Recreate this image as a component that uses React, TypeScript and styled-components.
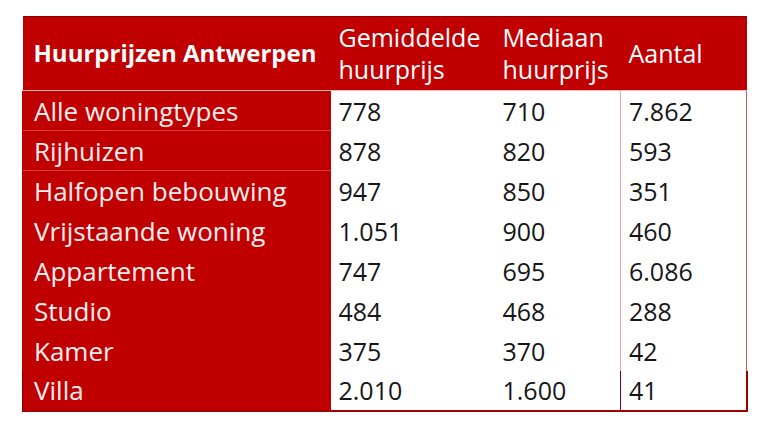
import React from 'react';
import styled, { createGlobalStyle } from 'styled-components';

type Row = {
  label: string;
  avg: string;
  median: string;
  count: string;
};

const rows: Row[] = [
  { label: 'Alle woningtypes', avg: '778', median: '710', count: '7.862' },
  { label: 'Rijhuizen', avg: '878', median: '820', count: '593' },
  { label: 'Halfopen bebouwing', avg: '947', median: '850', count: '351' },
  { label: 'Vrijstaande woning', avg: '1.051', median: '900', count: '460' },
  { label: 'Appartement', avg: '747', median: '695', count: '6.086' },
  { label: 'Studio', avg: '484', median: '468', count: '288' },
  { label: 'Kamer', avg: '375', median: '370', count: '42' },
  { label: 'Villa', avg: '2.010', median: '1.600', count: '41' },
];

const RED = '#c00000';

const GlobalStyle = createGlobalStyle`
  html, body {
    margin: 0;
    background: #ffffff;
  }
  body {
    font-family: "Open Sans", "Noto Sans", sans-serif;
  }
`;

const Page = styled.div`
  padding: 16px 0 0 22px;
`;

const Table = styled.table`
  border-collapse: collapse;
  table-layout: fixed;
  width: 724px;
  font-size: 25px;
  line-height: 32px;
`;

const Col = styled.col<{ $width: number }>`
  width: ${(p) => p.$width}px;
`;

const HeadRow = styled.tr`
  height: 74px;
  background: ${RED};
  color: #ffffff;
`;

const HeadCell = styled.th<{ $bold?: boolean }>`
  box-sizing: border-box;
  padding: 0 0 2px ${(p) => (p.$bold ? 11 : 8)}px;
  text-align: left;
  vertical-align: middle;
  font-weight: ${(p) => (p.$bold ? 700 : 400)};
  font-size: ${(p) => (p.$bold ? 24 : 25)}px;
  border-top: 1px solid #8a0000;
  border-bottom: 1px solid #f2b8b8;
  white-space: nowrap;
`;

const BodyRow = styled.tr`
  height: 40px;
`;

const LabelCell = styled.td<{ $last?: boolean; $ruled?: boolean }>`
  box-sizing: border-box;
  padding: 0 0 0 11px;
  background: ${RED};
  color: #fdeeee;
  font-size: 26px;
  border-top: 1px solid ${(p) => (p.$ruled ? '#d93a3a' : RED)};
  border-left: 1px solid ${(p) => (p.$last ? '#8a0000' : RED)};
  border-bottom: ${(p) => (p.$last ? '2px solid #a00000' : 'none')};
  white-space: nowrap;
`;

const NumCell = styled.td<{ $last?: boolean; $count?: boolean }>`
  box-sizing: border-box;
  padding: 0 0 0 8px;
  color: #161616;
  background: #ffffff;
  border-bottom: ${(p) => (p.$last ? '2px solid #a00000' : 'none')};
  border-left: ${(p) =>
    p.$count ? `1px solid ${p.$last ? '#8a0000' : '#e6a4a4'}` : 'none'};
  border-right: ${(p) =>
    p.$count ? `${p.$last ? 2 : 1}px solid ${p.$last ? '#a00000' : '#c85a5a'}` : 'none'};
`;

export default function App() {
  return (
    <Page>
      <GlobalStyle />
      <Table>
        <colgroup>
          <Col $width={308} />
          <Col $width={164} />
          <Col $width={126} />
          <Col $width={126} />
        </colgroup>
        <thead>
          <HeadRow>
            <HeadCell $bold>Huurprijzen Antwerpen</HeadCell>
            <HeadCell>
              Gemiddelde
              <br />
              huurprijs
            </HeadCell>
            <HeadCell>
              Mediaan
              <br />
              huurprijs
            </HeadCell>
            <HeadCell>Aantal</HeadCell>
          </HeadRow>
        </thead>
        <tbody>
          {rows.map((r, i) => {
            const last = i === rows.length - 1;
            return (
              <BodyRow key={r.label}>
                <LabelCell $last={last} $ruled={i < 3}>
                  {r.label}
                </LabelCell>
                <NumCell $last={last}>{r.avg}</NumCell>
                <NumCell $last={last}>{r.median}</NumCell>
                <NumCell $last={last} $count>
                  {r.count}
                </NumCell>
              </BodyRow>
            );
          })}
        </tbody>
      </Table>
    </Page>
  );
}
